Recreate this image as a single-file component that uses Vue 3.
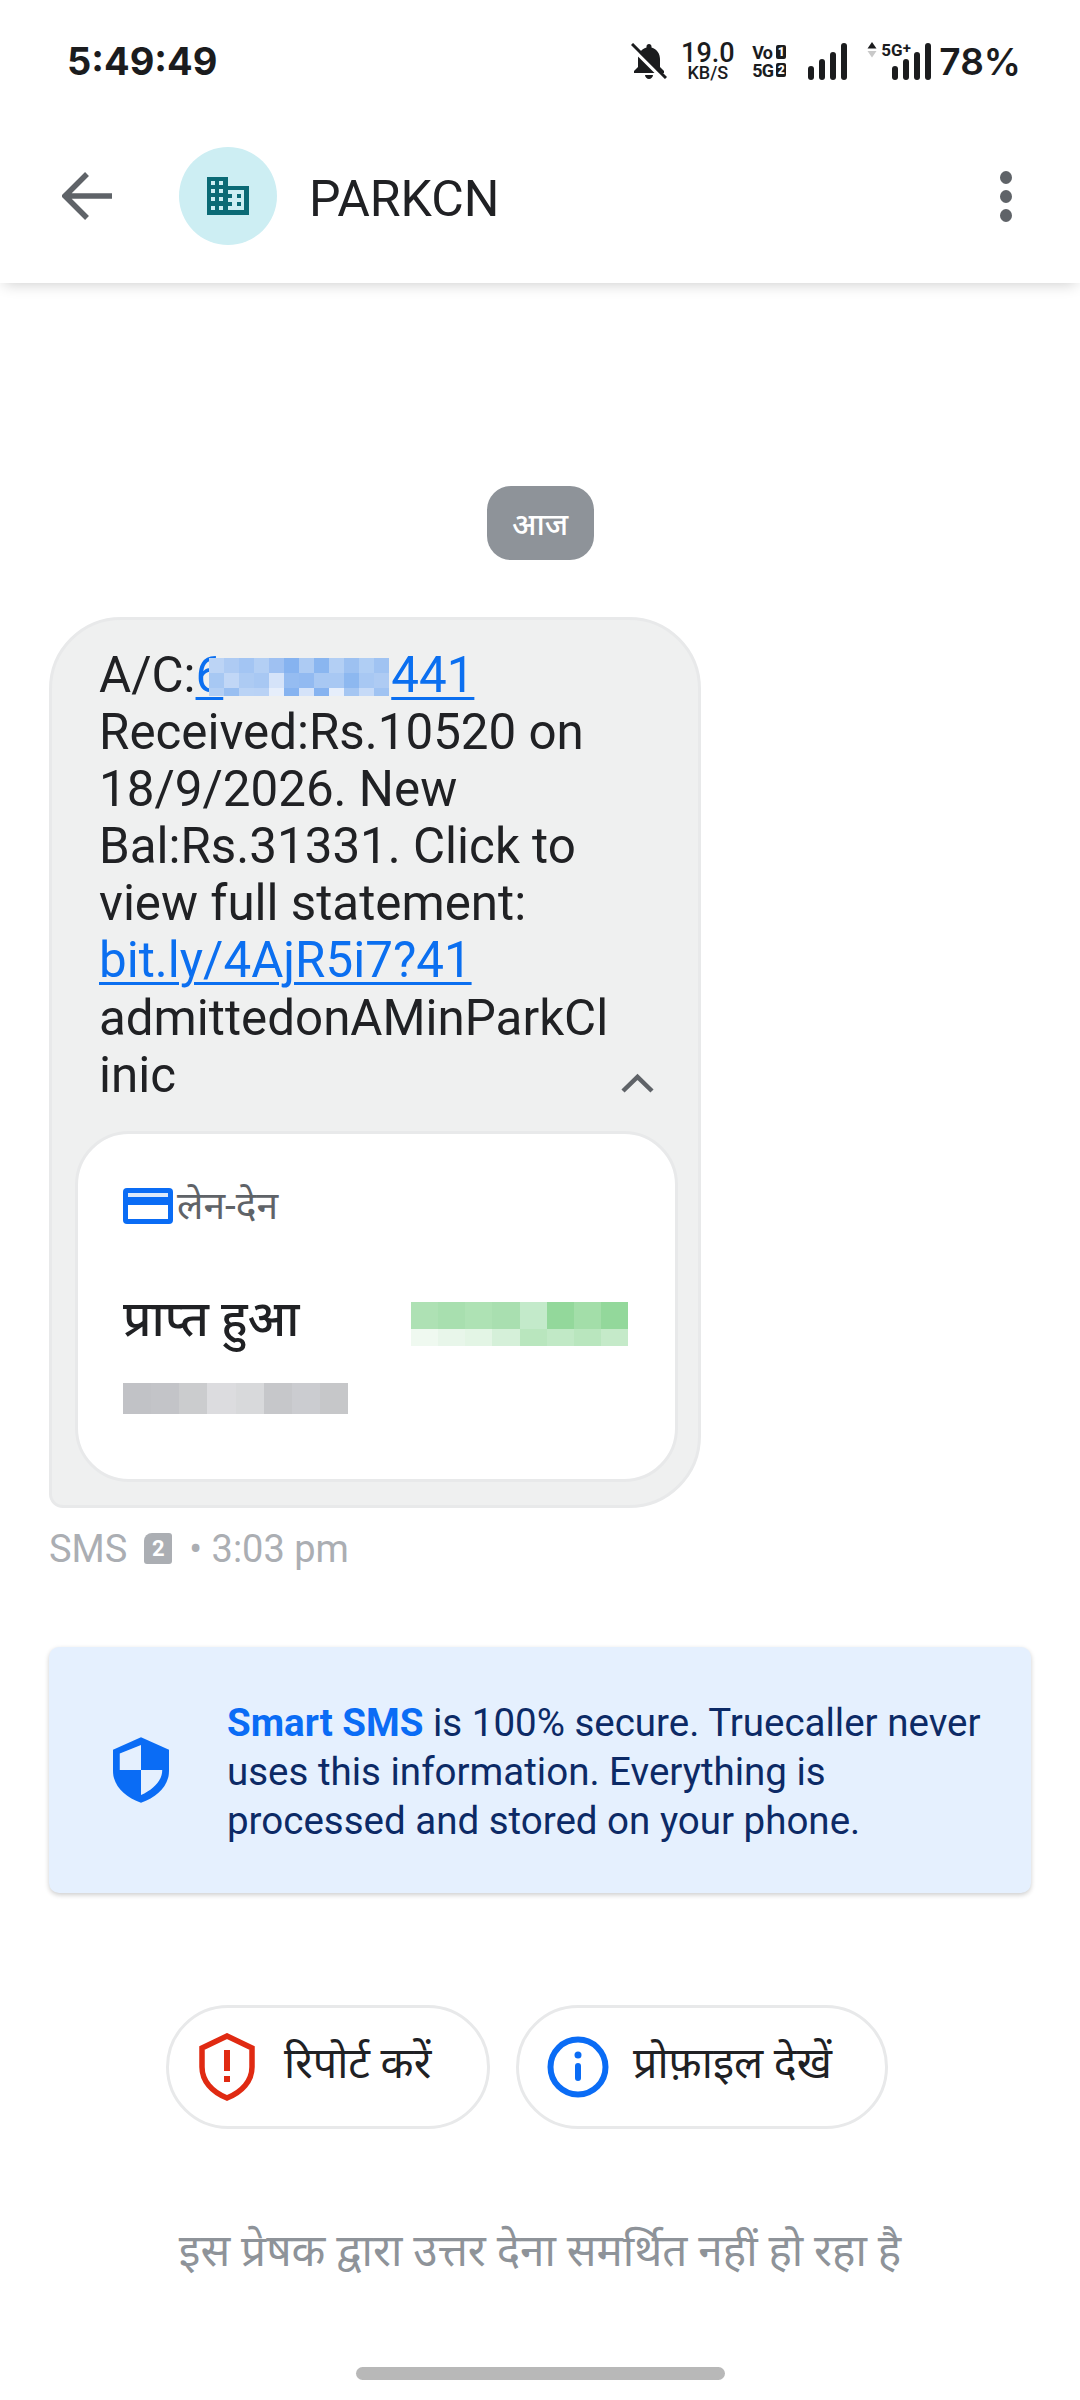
<script setup>
const acctPixels = [
  ['#bcd4f5','#aecbf3','#a3c5f3','#b3cff4','#9fc1f2','#86b3f0','#adcbf3','#8ab6f0','#b3cff4','#9dc1f1','#b0cef4','#a0c3f2'],
  ['#a7c8f3','#c1d7f6','#adcbf3','#a8c8f3','#d5e3f9','#95bcf1','#92baf1','#a8c8f3','#a8c8f3','#8db8f0','#a8c8f3','#aecbf3'],
  ['#b3cff4','#99bff1','#bad3f5','#b9d2f5','#e6eefb','#86b3f0','#d5e3f9','#86b3f0','#e6eefb','#a5c6f2','#c6daf7','#a0c3f2']
]
const greenPixels = [
  ['#aee1b4','#a8dfaf','#aee2b4','#a9dfb0','#c3eaca','#93d89b','#a3dea9','#93d89b'],
  ['#eff9f0','#e8f6ea','#e3f5e5','#d5f0d9','#b9e6be','#c1e9c6','#b9e6be','#c5eac9']
]
const grayPixels = ['#c1c2c6','#c3c4c8','#cbccce','#dcdcdf','#d8d9db','#c6c7ca','#cbccd0','#c6c7c9']
</script>

<template>
  <div class="screen">
    <div class="status">
      <span class="time">5:49:49</span>
      <div class="status-right">
        <svg class="bell" width="36" height="36" viewBox="0 0 36 36">
          <path d="M18 1c-1.500 0-2.500 1-2.500 2.500v1C10 6 7 11 7 16v8l-4 4v2h30v-2l-4-4v-8C29 11 26 6 20.500 4.500v-1C20.500 2 19.500 1 18 1zM14 32h8c0 2-2 4-4 4s-4-2-4-4z" fill="#1b1c1e"/>
          <path d="M-1 3l33 33" stroke="#fff" stroke-width="3.500"/>
          <path d="M1 1l34 34" stroke="#1b1c1e" stroke-width="3"/>
        </svg>
        <div class="speed"><span class="speed-num">19.0</span><span class="speed-unit">KB/S</span></div>
        <div class="volte">
          <div class="volte-row"><span>Vo</span><b>1</b></div>
          <div class="volte-row"><span>5G</span><b>2</b></div>
        </div>
        <div class="bars bars-one">
          <i style="height:14px"></i><i style="height:21px"></i><i style="height:28px"></i><i style="height:37px"></i>
        </div>
        <div class="net">
          <div class="net-top">
            <svg width="10" height="16" viewBox="0 0 10 16"><path d="M5 0l4.500 6.500H.5z" fill="#1b1c1e"/><path d="M.5 9h9L5 15.500z" fill="#c9c9c9"/></svg>
            <span class="net-5g">5G</span><span class="net-plus">+</span>
          </div>
          <div class="bars bars-two">
            <i style="height:14px"></i><i style="height:21px"></i><i style="height:28px"></i><i style="height:37px"></i>
          </div>
        </div>
        <span class="battery">78%</span>
      </div>
    </div>

    <header class="appbar">
      <svg class="back" width="50" height="48" viewBox="0 0 50 48"><path d="M25 2L3 24l22 22M3 24h47" fill="none" stroke="#5f6368" stroke-width="5.500"/></svg>
      <div class="avatar">
        <svg width="42" height="38" viewBox="0 0 42 38">
          <path d="M0 0h21v9h21v29H0z" fill="#0b6a75"/>
          <g fill="#cdeef3">
            <rect x="4" y="4" width="4" height="4"/><rect x="12" y="4" width="4" height="4"/>
            <rect x="4" y="12" width="4" height="4"/><rect x="12" y="12" width="4" height="4"/>
            <rect x="4" y="20" width="4" height="4"/><rect x="12" y="20" width="4" height="4"/>
            <rect x="4" y="29" width="4" height="4"/><rect x="12" y="29" width="4" height="4"/>
            <rect x="21" y="13" width="16" height="20"/>
          </g>
          <g fill="#0b6a75"><rect x="21" y="17" width="4" height="4"/><rect x="21" y="25" width="4" height="4"/><rect x="30" y="17" width="4" height="4"/><rect x="30" y="25" width="4" height="4"/></g>
        </svg>
      </div>
      <span class="title">PARKCN</span>
      <div class="more"><i></i><i></i><i></i></div>
    </header>

    <main class="thread">
      <div class="chip">आज</div>

      <div class="bubble">
        <div class="msg">
          A/C:<a class="link">6<span class="acct"><span v-for="(row, r) in acctPixels" :key="r" class="acct-row"><i v-for="(c, n) in row" :key="n" :style="{ background: c }"></i></span></span>441</a><br>
          Received:Rs.10520 on<br>
          18/9/2026. New<br>
          Bal:Rs.31331. Click to<br>
          view full statement:<br>
          <a class="link">bit.ly/4AjR5i7?41</a><br>
          admittedonAMinParkCl
          <div class="last-line">
            <span>inic</span>
            <svg width="33" height="20" viewBox="0 0 33 20"><path d="M2 18L16.500 4 31 18" fill="none" stroke="#5f6368" stroke-width="4.500"/></svg>
          </div>
        </div>

        <div class="card">
          <div class="card-head">
            <svg width="50" height="36" viewBox="0 0 50 36">
              <rect x="0" y="0" width="50" height="36" rx="4" fill="#0a6cf5"/>
              <rect x="5" y="5" width="40" height="4" fill="#dce9fb"/>
              <rect x="5" y="17" width="40" height="14" fill="#fff"/>
            </svg>
            <span>लेन-देन</span>
          </div>
          <div class="card-row">
            <span class="card-status">प्राप्त हुआ</span>
            <div class="green">
              <div v-for="(row, r) in greenPixels" :key="r" class="green-row"><i v-for="(c, n) in row" :key="n" :style="{ background: c }"></i></div>
            </div>
          </div>
          <div class="gray"><i v-for="(c, n) in grayPixels" :key="n" :style="{ background: c }"></i></div>
        </div>
      </div>

      <div class="meta">
        <span>SMS</span>
        <span class="sim">2</span>
        <span>• 3:03 pm</span>
      </div>

      <div class="secure">
        <svg class="shield" width="56" height="68" viewBox="0 0 58 68">
          <path d="M29 0l29 13v22c0 15-12 27-29 33C12 62 0 50 0 35V13z" fill="#0a6cf5"/>
          <path d="M29 8L7 17v17h22zM29 34h22c0 11-9 20-22 26z" fill="#e5f0fe"/>
        </svg>
        <p><b>Smart SMS</b> is 100% secure. Truecaller never<br>uses this information. Everything is<br>processed and stored on your phone.</p>
      </div>

      <div class="actions">
        <button class="pill pill-report">
          <svg width="56" height="68" viewBox="0 0 56 68">
            <path d="M28 3l25 12v19c0 14-10 25-25 31C13 59 3 48 3 34V15z" fill="none" stroke="#e02a12" stroke-width="5.500"/>
            <rect x="25" y="17" width="6" height="21" fill="#e02a12"/><rect x="25" y="43" width="6" height="6" fill="#e02a12"/>
          </svg>
          <span>रिपोर्ट करें</span>
        </button>
        <button class="pill pill-profile">
          <svg width="62" height="62" viewBox="0 0 62 62">
            <circle cx="31" cy="31" r="27.500" fill="none" stroke="#0a6cf5" stroke-width="6"/>
            <circle cx="31" cy="19" r="3.500" fill="#0a6cf5"/><rect x="28" y="27" width="6" height="18" rx="3" fill="#0a6cf5"/>
          </svg>
          <span>प्रोफ़ाइल देखें</span>
        </button>
      </div>

      <p class="no-reply">इस प्रेषक द्वारा उत्तर देना समर्थित नहीं हो रहा है</p>
    </main>

    <div class="home-bar"></div>
  </div>
</template>

<style>
html, body { background: #fff; }
</style>

<style scoped>
.screen {
  width: 1080px;
  height: 2400px;
  background: #fff;
  display: flex;
  flex-direction: column;
  font-family: Roboto, "Noto Sans", "Liberation Sans", sans-serif;
  color: #202124;
  overflow: hidden;
}
.status {
  height: 115px;
  padding: 7px 59px 0 67px;
  display: flex;
  align-items: center;
  justify-content: space-between;
  box-sizing: border-box;
}
.time { font-family: Inter, Roboto, sans-serif; font-size: 38px; font-weight: 700; color: #1b1c1e; }
.status-right { display: flex; align-items: center; color: #1b1c1e; }
.speed { display: flex; flex-direction: column; align-items: center; width: 55px; margin-left: 13px; }
.speed-num { font-size: 27px; font-weight: 500; line-height: 24px; }
.speed-unit { font-size: 18px; font-weight: 500; line-height: 16px; }
.volte { display: flex; flex-direction: column; gap: 3px; width: 34px; margin-left: 17px; }
.volte-row { display: flex; justify-content: space-between; align-items: center; font-size: 18px; font-weight: 700; line-height: 15px; letter-spacing: -1px; }
.volte-row b { background: #1b1c1e; color: #fff; font-size: 12px; width: 10px; height: 14px; line-height: 14px; letter-spacing: 0; text-align: center; border-radius: 2px; }
.bars { display: flex; align-items: flex-end; gap: 5px; height: 37px; }
.bars i { width: 6px; background: #1b1c1e; border-radius: 3px; display: block; }
.bars-one { margin-left: 22px; }
.net { position: relative; width: 64px; height: 38px; margin-left: 20px; display: flex; justify-content: flex-end; align-items: flex-end; }
.net-top { position: absolute; top: 0; left: 0; display: flex; align-items: flex-start; }
.net-5g { font-size: 17px; font-weight: 700; margin-left: 4px; line-height: 17px; }
.net-plus { font-size: 15px; font-weight: 700; line-height: 12px; }
.battery { font-family: Inter, Roboto, sans-serif; font-size: 37px; font-weight: 600; margin-left: 8px; }

.appbar {
  height: 168px;
  display: flex;
  align-items: center;
  padding: 0 26px 6px 62px;
  box-sizing: border-box;
  box-shadow: 0 5px 14px -4px rgba(0, 0, 0, 0.2);
  clip-path: inset(0 0 -30px 0);
  background: #fff;
}
.avatar {
  width: 98px;
  height: 98px;
  border-radius: 50%;
  background: #cdeef3;
  display: flex;
  align-items: center;
  justify-content: center;
  margin-left: 67px;
}
.title { font-size: 50px; margin-left: 32px; padding-top: 5px; color: #202124; }
.more { margin-left: auto; display: flex; flex-direction: column; gap: 6px; padding-right: 42px; }
.more i { width: 12px; height: 13px; border-radius: 50%; background: #5f6368; display: block; }

.thread { flex: 1; display: flex; flex-direction: column; padding: 203px 49px 0; }
.chip {
  align-self: center;
  width: 107px;
  height: 74px;
  border-radius: 24px;
  background: #8e9399;
  color: #fff;
  font-size: 31px;
  font-weight: 500;
  display: flex;
  align-items: center;
  justify-content: center;
}
.bubble {
  margin-top: 57px;
  width: 652px;
  box-sizing: border-box;
  background: #eff0f0;
  border: 3px solid #e8e9ea;
  border-radius: 72px 72px 72px 14px;
  padding: 27px 20px 23px 23px;
}
.msg { padding-left: 24px; font-size: 49.300px; line-height: 57.1px; color: #202124; }
.link { color: #0b6ff0; text-decoration: underline; text-decoration-thickness: 3px; text-underline-offset: 5px; }
.acct { display: inline-block; overflow: hidden; vertical-align: -4px; margin-left: -14px; margin-right: 2px; width: 180px; height: 38px; }
.acct-row { display: flex; height: 15px; }
.acct-row:last-child { height: 8px; }
.acct-row i { flex: 1; display: block; }
.last-line { display: flex; justify-content: space-between; align-items: flex-end; padding-right: 24px; }
.last-line svg { margin-bottom: 11px; }
.card {
  margin-top: 27px;
  height: 351px;
  box-sizing: border-box;
  background: #fff;
  border: 3px solid #e8e9ea;
  border-radius: 54px;
  padding: 50px 47px 0 45px;
}
.card-head { display: flex; align-items: center; gap: 4px; font-size: 39px; color: #5f6368; line-height: 44px; }
.card-row { display: flex; justify-content: space-between; align-items: flex-start; margin-top: 62px; }
.card-status { font-size: 49px; font-weight: 500; line-height: 60px; color: #202124; }
.green { width: 217px; margin-top: 12px; display: flex; flex-direction: column; }
.green-row { display: flex; height: 27px; }
.green-row:last-child { height: 17px; }
.green-row i { flex: 1; display: block; }
.gray { display: flex; width: 225px; height: 31px; margin-top: 33px; }
.gray i { flex: 1; display: block; }

.meta { display: flex; align-items: center; gap: 17px; margin-top: 18px; font-size: 38px; color: #abaeb3; line-height: 46px; }
.sim { width: 28px; height: 31px; background: #abaeb3; color: #fff; font-size: 22px; font-weight: 700; border-radius: 8px 3px 3px 3px; display: flex; align-items: center; justify-content: center; }

.secure {
  margin-top: 75px;
  height: 246px;
  box-sizing: border-box;
  background: #e5f0fe;
  border-radius: 10px;
  box-shadow: 0 2px 5px rgba(0, 0, 0, 0.2);
  display: flex;
  align-items: center;
  padding: 0 0 0 64px;
}
.secure p { margin: 4px 0 0 58px; font-size: 38.500px; line-height: 49px; color: #0c2a66; white-space: nowrap; }
.secure b { color: #0a6cf5; font-weight: 700; }

.actions { display: flex; justify-content: center; gap: 26px; margin: 112px 26px 0 0; }
.pill {
  height: 124px;
  box-sizing: border-box;
  background: #fff;
  border: 3px solid #e8e9ea;
  border-radius: 62px;
  display: flex;
  align-items: center;
  padding: 0;
  font-family: inherit;
  font-size: 43px;
  color: #202124;
}
.pill span { line-height: 1; margin-bottom: 6px; }
.pill-report { width: 324px; padding-left: 30px; gap: 29px; }
.pill-profile { width: 372px; padding-left: 28px; gap: 24px; }
.no-reply { margin: 94px 0 0; text-align: center; font-size: 44px; color: #8e9399; line-height: 56px; }

.home-bar {
  align-self: flex-start;
  margin: 0 0 20px 356px;
  width: 369px;
  height: 13px;
  border-radius: 7px;
  background: #b8b8b8;
}
</style>
